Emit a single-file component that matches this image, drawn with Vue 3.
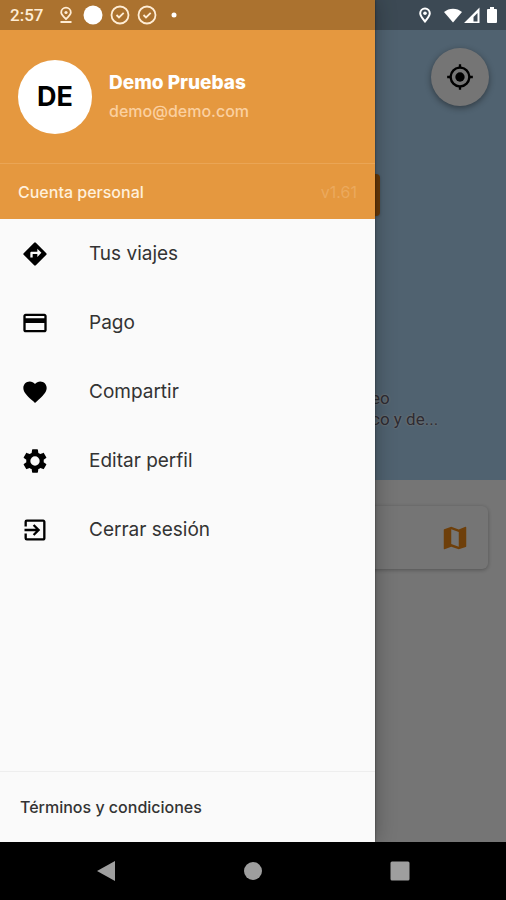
<script setup>
const menu = [
  { label: 'Tus viajes', path: 'M21.71 11.29l-9-9a1 1 0 0 0-1.42 0l-9 9a1 1 0 0 0 0 1.42l9 9c.39.39 1.02.39 1.41 0l9-9c.4-.39.4-1.02.01-1.42zM14 14.5V12h-4v3H8v-4c0-.55.45-1 1-1h5V7.500l3.500 3.500z' },
  { label: 'Pago', path: 'M20 4H4c-1.110 0-1.990.89-1.990 2L2 18c0 1.110.89 2 2 2h16c1.110 0 2-.89 2-2V6c0-1.110-.89-2-2-2zm0 14H4v-6h16zm0-10H4V6h16z' },
  { label: 'Compartir', path: 'M12 21.350l-1.450-1.320C5.400 15.360 2 12.280 2 8.500 2 5.420 4.420 3 7.500 3c1.740 0 3.410.81 4.500 2.090C13.090 3.810 14.760 3 16.500 3 19.580 3 22 5.420 22 8.500c0 3.780-3.400 6.860-8.550 11.540z' },
  { label: 'Editar perfil', path: 'M19.430 12.980c.04-.32.07-.64.07-.98s-.03-.66-.07-.98l2.110-1.650c.19-.15.24-.42.12-.64l-2-3.460c-.12-.22-.39-.3-.61-.22l-2.490 1c-.52-.4-1.080-.73-1.690-.98l-.38-2.650A.49.49 0 0 0 14 2h-4c-.25 0-.46.18-.49.42l-.38 2.650c-.61.25-1.170.59-1.690.98l-2.490-1c-.23-.09-.49 0-.61.22l-2 3.460c-.13.22-.07.49.12.64l2.110 1.650c-.04.32-.07.65-.07.98s.03.66.07.98l-2.110 1.650c-.19.15-.24.42-.12.64l2 3.460c.12.22.39.3.61.22l2.490-1c.52.4 1.080.73 1.690.98l.38 2.650c.03.24.24.42.49.42h4c.25 0 .46-.18.49-.42l.38-2.650c.61-.25 1.170-.59 1.690-.98l2.490 1c.23.09.49 0 .61-.22l2-3.460c.12-.22.07-.49-.12-.64zM12 16a4 4 0 1 1 0-8 4 4 0 0 1 0 8z' },
  { label: 'Cerrar sesión', path: 'M10.090 15.590L11.500 17l5-5-5-5-1.410 1.410L12.670 11H3v2h9.670zM19 3H5a2 2 0 0 0-2 2v4h2V5h14v14H5v-4H3v4a2 2 0 0 0 2 2h14c1.100 0 2-.9 2-2V5c0-1.100-.9-2-2-2z' },
]
</script>

<template>
  <div class="screen">
    <div class="stage">
      <main class="home">
        <section class="map">
          <button class="locate" type="button" aria-label="Mi ubicación">
            <svg viewBox="0 0 24 24"><circle cx="12" cy="12" r="4" /><path d="M20.940 11A8.990 8.990 0 0 0 13 3.060V1h-2v2.060A8.990 8.990 0 0 0 3.060 11H1v2h2.060A8.990 8.990 0 0 0 11 20.940V23h2v-2.060A8.990 8.990 0 0 0 20.940 13H23v-2zM12 19a7 7 0 1 1 0-14 7 7 0 0 1 0 14z" /></svg>
          </button>
          <div class="pickup"></div>
          <p class="place">eo<br>co y de...</p>
        </section>
        <section class="search">
          <div class="card">
            <button class="open-map" type="button" aria-label="Mapa">
              <svg viewBox="0 0 24 24"><path d="M20.500 3l-.16.03L15 5.100 9 3 3.360 4.900c-.21.07-.36.25-.36.48V20.500c0 .28.22.5.5.5l.16-.03L9 18.900l6 2.100 5.640-1.900c.21-.07.36-.25.36-.48V3.500c0-.28-.22-.5-.5-.5zM15 19l-6-2.110V5l6 2.110z" /></svg>
            </button>
          </div>
        </section>
      </main>
      <div class="scrim"></div>
      <aside class="drawer">
        <header class="profile">
          <div class="avatar">DE</div>
          <div>
            <div class="name">Demo Pruebas</div>
            <div class="email">demo@demo.com</div>
          </div>
        </header>
        <div class="account"><span>Cuenta personal</span><span class="version">v1.61</span></div>
        <nav class="menu">
          <a v-for="item in menu" :key="item.label" href="#">
            <svg viewBox="0 0 24 24"><path fill-rule="evenodd" :d="item.path" /></svg>
            {{ item.label }}
          </a>
        </nav>
        <footer class="terms"><a href="#">Términos y condiciones</a></footer>
      </aside>
      <div class="status">
        <span class="clock">2:57</span>
        <div class="notices">
          <svg viewBox="0 0 20 20" fill="none" stroke="currentColor" stroke-width="1.800"><path d="M10 14C7 11.300 5.200 9.500 5.200 7.500a4.800 4.800 0 0 1 9.600 0c0 2-1.800 3.800-4.800 6.500zM4.500 17h11" /><circle cx="10" cy="7.500" r="1.600" fill="currentColor" stroke="none" /></svg>
          <svg viewBox="0 0 20 20"><circle cx="10" cy="10" r="9.500" fill="#fff" /></svg>
          <svg v-for="n in 2" :key="n" viewBox="0 0 20 20" fill="none" stroke="currentColor" stroke-width="1.800"><circle cx="10" cy="10" r="8.500" /><path d="M6.500 10l2.500 2.500 4.700-4.700" /></svg>
          <svg viewBox="0 0 20 20"><circle cx="10" cy="10" r="2.500" fill="#fff" /></svg>
        </div>
        <div class="signals">
          <svg class="pin" viewBox="0 0 16 20" fill="none" stroke="currentColor" stroke-width="2"><path d="M8 16.500C5 13 3.200 10.500 3.200 8.300a4.800 4.800 0 0 1 9.600 0c0 2.200-1.800 4.700-4.800 8.200z" /><circle cx="8" cy="8.300" r="1.800" fill="currentColor" stroke="none" /></svg>
          <svg class="wifi" viewBox="0 0 20 20"><path d="M1 7C6 2.500 14 2.500 19 7L10 17.500z" /></svg>
          <svg class="cell" viewBox="0 0 18 20"><path fill-rule="evenodd" d="M16.500 2.500v15.500H1zM14.500 8l-4 4v4.500h4z" /></svg>
          <svg class="battery" viewBox="0 0 12 20"><path d="M4 2h4v2h2q1 0 1 1v12q0 1-1 1H2q-1 0-1-1V5q0-1 1-1h2z" /></svg>
        </div>
      </div>
    </div>
    <div class="system">
      <button type="button" aria-label="Atrás"><svg viewBox="0 0 20 20"><path d="M1 10L19 0v20z" /></svg></button>
      <button type="button" aria-label="Inicio"><svg viewBox="0 0 20 20"><circle cx="10" cy="10" r="9" /></svg></button>
      <button type="button" aria-label="Recientes"><svg viewBox="0 0 20 20"><rect x="0.500" y="0.500" width="19" height="19" rx="1.500" /></svg></button>
    </div>
  </div>
</template>

<style>
body { margin: 0; background: #000; }
</style>

<style scoped>
* { box-sizing: border-box; }
.screen { display: flex; flex-direction: column; min-height: 100vh; font-family: Inter, Roboto, sans-serif; }
svg { display: block; flex: none; fill: currentColor; }
svg[fill="none"] { fill: none; }
button { padding: 0; border: 0; background: none; cursor: pointer; }
a { color: inherit; text-decoration: none; }
.stage { position: relative; flex: 1; display: grid; grid-template: 1fr / 100%; overflow: hidden; }
.home, .scrim, .drawer { grid-area: 1 / 1; }
.home { display: flex; flex-direction: column; background: #fff; }
.map { display: flex; flex-direction: column; height: 480px; padding: 48px 17px 50px; background: #aed5f3; }
.locate { display: grid; place-items: center; align-self: flex-end; width: 58px; height: 58px; border-radius: 50%; background: #fff; color: #000; box-shadow: 0 2px 6px rgba(0, 0, 0, .4); }
.locate svg { width: 28px; height: 28px; }
.pickup { width: 77%; height: 42px; margin-top: 68px; border-radius: 4px; background: #e07c12; box-shadow: 0 1px 3px rgba(0, 0, 0, .2); }
.place { width: 25%; margin: auto 0 0; align-self: flex-end; font: 17px/21px Roboto, sans-serif; color: #605e70; text-shadow: 0 0 2px #fff, 0 0 2px #fff; }
.search { flex: 1; padding: 26px 18px; }
.card { display: flex; align-items: center; justify-content: flex-end; height: 63px; padding: 0 18px; border-radius: 6px; background: #fff; box-shadow: 0 1px 4px rgba(0, 0, 0, .3); }
.open-map { color: #f08a16; }
.open-map svg { width: 30px; height: 30px; }
.scrim { background: rgba(0, 0, 0, .54); }
.drawer { display: flex; flex-direction: column; width: calc(100% - 131px); background: #fafafa; box-shadow: 0 0 20px rgba(0, 0, 0, .3), 0 0 2px rgba(0, 0, 0, .5); }
.profile { display: flex; align-items: center; gap: 17px; height: 163px; padding: 30px 18px 0; background: #e5983f; color: #fff; }
.avatar { display: grid; place-items: center; width: 74px; height: 74px; border-radius: 50%; background: #fff; color: #000; font-size: 27px; font-weight: 700; }
.name { font-size: 19px; line-height: 28px; font-weight: 800; }
.email { font-size: 16px; line-height: 28px; font-weight: 500; color: #fbd0a0; }
.account { display: flex; align-items: center; justify-content: space-between; height: 56px; padding: 0 18px; border-top: 1px solid #eaa555; background: #e5983f; color: #fff0dc; font-size: 16px; font-weight: 500; }
.version { color: #eba95d; font-weight: 400; }
.menu { flex: 1; display: flex; flex-direction: column; }
.menu a { display: flex; align-items: center; gap: 40px; height: 69px; padding: 0 21px; color: #333; font-size: 19px; }
.menu svg { width: 28px; height: 28px; color: #000; }
.terms { display: flex; align-items: center; height: 71px; padding: 0 20px; border-top: 1px solid #eee; color: #333; font-size: 16px; font-weight: 500; }
.status { position: absolute; inset: 0 0 auto; display: flex; align-items: center; height: 30px; padding: 0 8px 0 10px; background: rgba(0, 0, 0, .25); color: #ffedd5; }
.clock { width: 46px; font: 500 17px/30px Roboto, sans-serif; }
.notices { display: flex; gap: 7px; }
.notices svg { width: 20px; height: 20px; }
.signals { display: flex; align-items: center; margin-left: auto; color: #fff; }
.signals svg { height: 20px; }
.pin { width: 16px; margin-right: 10px; }
.wifi { width: 20px; }
.cell { width: 18px; margin-right: 5px; }
.battery { width: 12px; }
.system { display: flex; align-items: center; justify-content: space-between; height: 58px; padding: 0 19%; background: #000; color: #9e9e9e; }
.system button { color: inherit; }
.system svg { width: 20px; height: 20px; }
</style>
